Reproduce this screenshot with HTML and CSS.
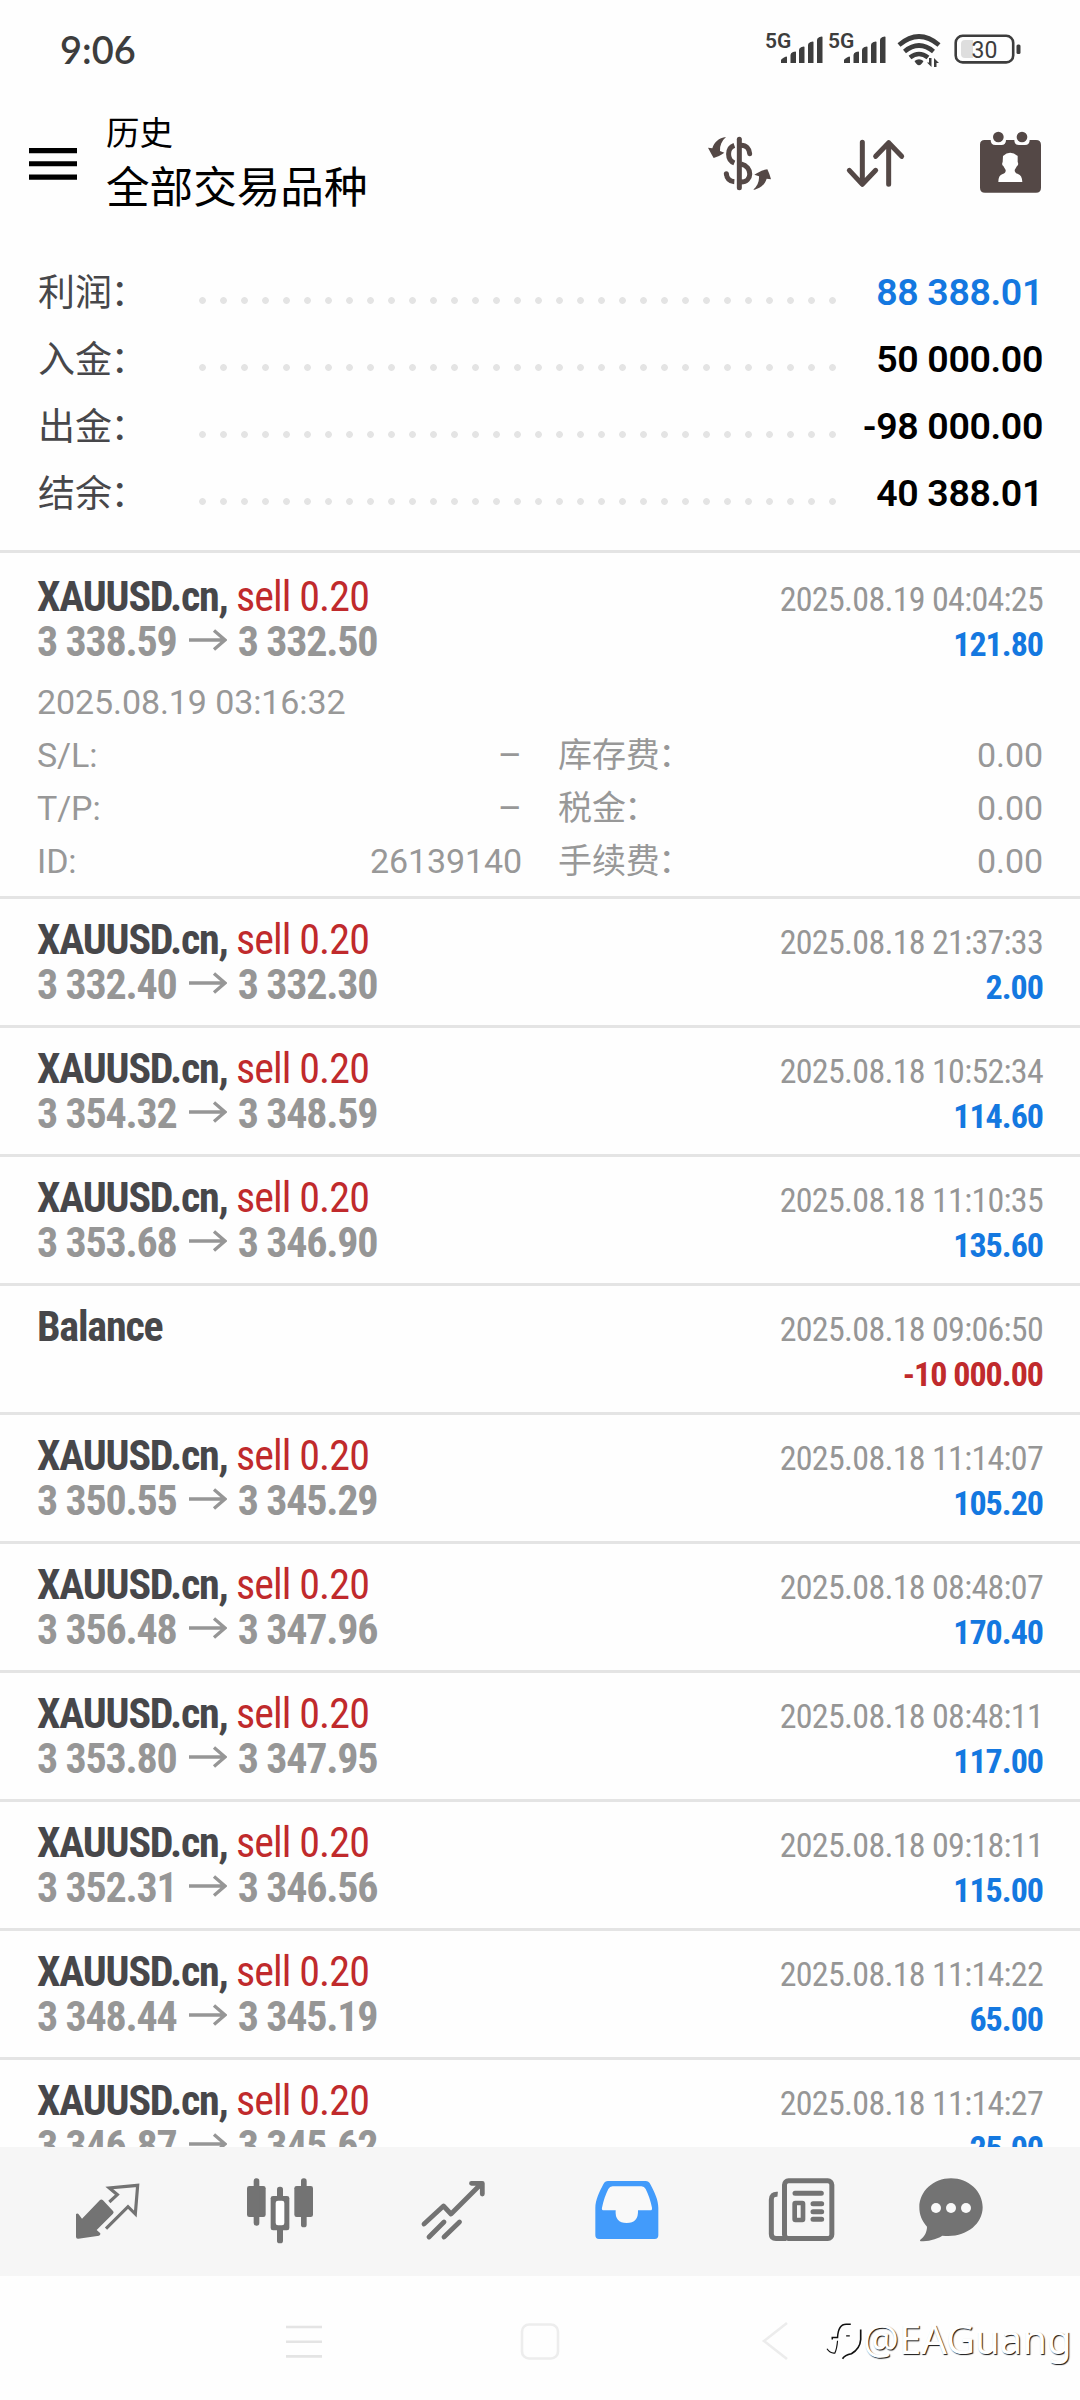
FILE: index.html
```
<!DOCTYPE html>
<html lang="zh-CN">
<head>
<meta charset="utf-8">
<title>历史</title>
<link rel="stylesheet" href="styles.css">
</head>
<body>
<div class="status">
  <span class="clock">9:06</span>
  <svg class="status-icons" viewBox="760 28 270 44" fill="#3d3d3d">
    <defs>
      <g id="signal">
        <text class="net" x="765" y="48">5G</text>
        <path d="M781 60q0-1 3-2.500q3-1.500 3-.5v6h-6zM790.500 55q0-2 2.500-3q3-1 3 0v11h-5.500zM799 50q0-2 2.500-3q3-1 3 0v16h-5.500zM808 45q0-2 2.500-3q3-1 3 0v21h-5.500zM817 40q0-2 2.500-3q3-1 3 0v26h-5.500z"/>
      </g>
    </defs>
    <use href="#signal"/>
    <use href="#signal" x="63"/>
    <g fill="none" stroke="#3d3d3d" stroke-width="4.600">
      <path d="M899 45q20-17 40 0M904.500 51.500q14.500-12 29 0M910 57.500q9-7 18 0" />
    </g>
    <path d="M914.500 61q4.500-3.500 9 0q-2 4-4.500 4.300q-2.500-.300-4.500-4.300zM931.500 58v9l-4.500-4.500h2v-4.500zM934 67v-9l5 5h-2.500v4z"/>
    <rect x="955.700" y="35.800" width="57.500" height="26.600" rx="7" fill="none" stroke="#3d3d3d" stroke-width="2.600"/>
    <path d="M961 44q0-4 4-4h8v18h-8q-4 0-4-4z" fill="#dedede"/>
    <rect x="1016.500" y="44.500" width="4" height="9.500" rx="1.500"/>
    <text class="battery" x="971.500" y="57.500">30</text>
  </svg>
</div>

<header class="header">
  <svg class="menu" viewBox="0 0 48 32"><path d="M0 0h48v5.300H0zM0 13.300h48v5H0zM0 26.400h48v5.300H0z"/></svg>
  <div class="titles">
    <div class="subtitle">历史</div>
    <div class="title">全部交易品种</div>
  </div>
  <div class="actions">
    <svg width="70" height="66" viewBox="72 390 210 198" fill="#544846">
      <g fill="none" stroke="#544846" stroke-width="15">
        <path d="M178 418V563" stroke-linecap="round"/>
        <path d="M163 436C140 444 140 480 163 489"/>
        <path d="M184 436C198 436 208 446 209 461" stroke-linecap="round"/>
        <path d="M183 492C218 500 218 546 183 546"/>
        <path d="M139 521C140 534 148 544 163 545" />
      </g>
      <circle cx="139" cy="521" r="7.500"/>
      <path d="M138 411C116 414 103 426 97 445L84 443C90 454 96 466 101 474C112 470 122 466 133 458L120 453C119 437 125 423 138 411z"/>
      <path d="M219 570C241 566 255 553 260 536L273 538C270 526 266 516 262 508C249 510 237 516 223 524L237 529C238 545 232 558 219 570z"/>
    </svg>
    <svg width="66" height="66" viewBox="486 390 198 198" fill="none" stroke="#544846" stroke-width="15" stroke-linecap="round" stroke-linejoin="round">
      <path d="M547 427V552M508 511L547 553L587 511M626 553V428M587 469L626 428L665 469"/>
    </svg>
    <svg width="66" height="66" viewBox="894 390 198 198" fill="#544846">
      <path d="M914 420h18q0 15 14 15h18q14 0 14-15h25q0 15 14 15h18q14 0 14-15h19q15 0 15 15v128q0 15-15 15H915q-15 0-15-15V434q0-14 14-14z"/>
      <circle cx="955" cy="411" r="16"/><circle cx="1026" cy="411" r="16"/>
      <path fill="#fff" d="M969 468q21-20 44 0v18q4 8-2 12l-7 12q0 9 10 12q12 3 13 24H955q0-21 13-24q10-3 9-12l-7-12q-6-4-2-12z"/>
    </svg>
  </div>
</header>

<section class="summary">
  <div class="sum-row"><span class="sum-label">利润<span class="colon">：</span></span><i class="dots"></i><b class="sum-value blue">88 388.01</b></div>
  <div class="sum-row"><span class="sum-label">入金<span class="colon">：</span></span><i class="dots"></i><b class="sum-value">50 000.00</b></div>
  <div class="sum-row"><span class="sum-label">出金<span class="colon">：</span></span><i class="dots"></i><b class="sum-value">-98 000.00</b></div>
  <div class="sum-row"><span class="sum-label">结余<span class="colon">：</span></span><i class="dots"></i><b class="sum-value">40 388.01</b></div>
</section>

<svg class="defs"><symbol id="arrow" viewBox="0 0 38 22"><path d="M0 11H36M25 1.500L36 11L25 20.500" fill="none" stroke="#969696" stroke-width="3.300"/></symbol></svg>

<main class="deals">
  <article class="deal open">
    <div class="line"><span class="symbol">XAUUSD.cn, <span class="side">sell 0.20</span></span><span class="time">2025.08.19 04:04:25</span></div>
    <div class="line"><span class="price">3 338.59<svg class="arrow"><use href="#arrow"/></svg>3 332.50</span><b class="profit blue">121.80</b></div>
    <div class="details">
      <span class="opened">2025.08.19 03:16:32</span>
      <div class="pair"><span>S/L:</span><span class="dash">–</span></div>
      <div class="pair"><span>库存费<span class="colon">：</span></span><span>0.00</span></div>
      <div class="pair"><span>T/P:</span><span class="dash">–</span></div>
      <div class="pair"><span>税金<span class="colon">：</span></span><span>0.00</span></div>
      <div class="pair"><span>ID:</span><span>26139140</span></div>
      <div class="pair"><span>手续费<span class="colon">：</span></span><span>0.00</span></div>
    </div>
  </article>
  <article class="deal">
    <div class="line"><span class="symbol">XAUUSD.cn, <span class="side">sell 0.20</span></span><span class="time">2025.08.18 21:37:33</span></div>
    <div class="line"><span class="price">3 332.40<svg class="arrow"><use href="#arrow"/></svg>3 332.30</span><b class="profit blue">2.00</b></div>
  </article>
  <article class="deal">
    <div class="line"><span class="symbol">XAUUSD.cn, <span class="side">sell 0.20</span></span><span class="time">2025.08.18 10:52:34</span></div>
    <div class="line"><span class="price">3 354.32<svg class="arrow"><use href="#arrow"/></svg>3 348.59</span><b class="profit blue">114.60</b></div>
  </article>
  <article class="deal">
    <div class="line"><span class="symbol">XAUUSD.cn, <span class="side">sell 0.20</span></span><span class="time">2025.08.18 11:10:35</span></div>
    <div class="line"><span class="price">3 353.68<svg class="arrow"><use href="#arrow"/></svg>3 346.90</span><b class="profit blue">135.60</b></div>
  </article>
  <article class="deal">
    <div class="line"><span class="symbol">Balance</span><span class="time">2025.08.18 09:06:50</span></div>
    <div class="line"><span class="price">&nbsp;</span><b class="profit red">-10 000.00</b></div>
  </article>
  <article class="deal">
    <div class="line"><span class="symbol">XAUUSD.cn, <span class="side">sell 0.20</span></span><span class="time">2025.08.18 11:14:07</span></div>
    <div class="line"><span class="price">3 350.55<svg class="arrow"><use href="#arrow"/></svg>3 345.29</span><b class="profit blue">105.20</b></div>
  </article>
  <article class="deal">
    <div class="line"><span class="symbol">XAUUSD.cn, <span class="side">sell 0.20</span></span><span class="time">2025.08.18 08:48:07</span></div>
    <div class="line"><span class="price">3 356.48<svg class="arrow"><use href="#arrow"/></svg>3 347.96</span><b class="profit blue">170.40</b></div>
  </article>
  <article class="deal">
    <div class="line"><span class="symbol">XAUUSD.cn, <span class="side">sell 0.20</span></span><span class="time">2025.08.18 08:48:11</span></div>
    <div class="line"><span class="price">3 353.80<svg class="arrow"><use href="#arrow"/></svg>3 347.95</span><b class="profit blue">117.00</b></div>
  </article>
  <article class="deal">
    <div class="line"><span class="symbol">XAUUSD.cn, <span class="side">sell 0.20</span></span><span class="time">2025.08.18 09:18:11</span></div>
    <div class="line"><span class="price">3 352.31<svg class="arrow"><use href="#arrow"/></svg>3 346.56</span><b class="profit blue">115.00</b></div>
  </article>
  <article class="deal">
    <div class="line"><span class="symbol">XAUUSD.cn, <span class="side">sell 0.20</span></span><span class="time">2025.08.18 11:14:22</span></div>
    <div class="line"><span class="price">3 348.44<svg class="arrow"><use href="#arrow"/></svg>3 345.19</span><b class="profit blue">65.00</b></div>
  </article>
  <article class="deal">
    <div class="line"><span class="symbol">XAUUSD.cn, <span class="side">sell 0.20</span></span><span class="time">2025.08.18 11:14:27</span></div>
    <div class="line"><span class="price">3 346.87<svg class="arrow"><use href="#arrow"/></svg>3 345.62</span><b class="profit blue">25.00</b></div>
  </article>
</main>

<nav class="tabs">
  <svg viewBox="36 45 210 210" fill="#737373">
    <path d="M120 120q5-3 9 1l30 32q4 4 0 8L110 210l11 10q1 6-4 7l-62 9q-7 1-7-6V162q5-4 8 1l10 13z"/>
    <path d="M148 126L172 104L148 84L233 76L226 162L204 140L138 206" fill="none" stroke="#737373" stroke-width="9.500"/>
  </svg>
  <svg viewBox="552 45 210 210" fill="#737373">
    <rect x="561" y="78" width="56" height="93" rx="7"/><rect x="581" y="55" width="17" height="142" rx="8"/>
    <rect x="703" y="78" width="56" height="93" rx="7"/><rect x="723" y="55" width="17" height="147" rx="8"/>
    <rect x="651" y="80" width="18" height="170" rx="8"/><rect x="632" y="108" width="56" height="103" rx="7"/>
    <rect x="647" y="122" width="26" height="74" rx="7" fill="#fff"/>
  </svg>
  <svg viewBox="419 2175 70 70" fill="none" stroke="#737373" stroke-width="4.800" stroke-linecap="round" stroke-linejoin="round">
    <path d="M424 2224L443.500 2206L451 2214L481 2184M471.500 2183.300H482.300V2194M429 2237L444 2222M444 2237L459.500 2222"/>
  </svg>
  <svg viewBox="30 45 210 210" fill="#429bfb">
    <path d="M84 63H197q9 0 14 10C224 98 235 120 235 144V226q0 11-11 11H57q-11 0-11-11V144C46 120 58 96 70 73q5-10 14-10z"/>
    <path fill="#f9f9f9" d="M98 79H184q9 0 13 8C205 103 212 123 216 143q1 8-5 8H174q2 38-34 38q-36 0-33-38H72q-8 0-6-8C70 123 77 103 85 87q4-8 13-8z"/>
  </svg>
  <svg viewBox="555 45 210 210" fill="none" stroke="#737373" stroke-width="15">
    <rect x="613.500" y="62.500" width="142" height="173" rx="12"/>
    <path d="M593 103Q574 101 574 119V222Q574 235.500 588 235.500H618"/>
    <path d="M645 100H724M699 131H725M699 155H725M699 178H725" stroke-linecap="round"/>
    <rect x="644" y="129" width="25" height="51" rx="2" stroke-width="14"/>
  </svg>
  <svg viewBox="1008 45 210 210" fill="#737373">
    <path d="M1113 55C1166 55 1208 94 1208 142C1208 195 1153 236 1087 227C1068 239 1043 244 1022 244q-4-2-1-5C1033 230 1041 216 1041 200C1026 183 1018 165 1018 142C1018 94 1060 55 1113 55z"/>
    <g fill="#f9f9f9"><circle cx="1068" cy="144" r="15"/><circle cx="1113" cy="144" r="15"/><circle cx="1158" cy="144" r="15"/></g>
  </svg>
</nav>

<footer class="system">
  <svg viewBox="280 2316 50 50"><path d="M286 2327h36M286 2341.700h36M286 2356.400h36" stroke="#e4e4e4" stroke-width="2.600"/></svg>
  <svg viewBox="515 2316 50 50" fill="none"><rect x="522" y="2324.500" width="36" height="34" rx="7" stroke="#ededed" stroke-width="2.600"/></svg>
  <svg viewBox="755 2316 50 50" fill="none"><path d="M787 2323L764 2341L787 2359" stroke="#ececec" stroke-width="2.600"/></svg>
  <div class="watermark">
    <svg viewBox="225 65 110 130" fill="none" stroke="#111">
      <path d="M246 130V124H262Q264 84 288 84H302" stroke-width="4.500"/>
      <path d="M332 100V130Q330 158 304 173Q284 177 277 188" stroke-width="5"/>
      <path d="M262 134Q260 158 254 171Q240 173 230 158M288 119H299" stroke-width="3.500"/>
    </svg>
    <span>@EAGuang</span>
  </div>
</footer>
</body>
</html>
```
FILE: styles.css
```
* { box-sizing: border-box; }

body {
  margin: 0;
  width: 1080px;
  height: 2400px;
  overflow: hidden;
  display: flex;
  flex-direction: column;
  background: #fefefe;
  color: #000;
  font-family: Roboto, "Noto Sans CJK SC", sans-serif;
}

svg { display: block; flex: none; }
.defs { width: 0; height: 0; position: absolute; }
.blue { color: #1478e0; }
.red { color: #c02a2c; }
.colon { margin-left: -1.500px; }

.status {
  height: 100px;
  flex: none;
  display: flex;
  justify-content: space-between;
  padding: 0 50px 0 60px;
}
.clock {
  font: 600 38px/98px Lato, sans-serif;
  color: #3d3d3d;
}
.status-icons { width: 270px; height: 44px; margin-top: 28px; }
.net { font: 600 21px Roboto, sans-serif; }
.battery { font: 400 23px Roboto, sans-serif; }

.header {
  height: 160px;
  flex: none;
  display: flex;
  align-items: flex-start;
  padding: 0 36px 0 29px;
}
.menu { width: 48px; height: 32px; margin-top: 48px; }
.titles {
  margin: 8px auto 0 29px;
  font-family: "Noto Sans CJK SC", sans-serif;
}
.subtitle { font-size: 33.500px; line-height: 46px; }
.title { font-size: 43.600px; line-height: 60px; }
.actions { display: flex; gap: 68px; margin-top: 30px; }
.actions svg:last-child { margin-left: 2px; }

.summary {
  height: 293px;
  flex: none;
  padding: 0 37px 0 38px;
  border-bottom: 3px solid #e4e4e4;
}
.sum-row {
  height: 67px;
  display: flex;
  line-height: 67px;
}
.sum-label { width: 154px; font-size: 37px; color: #47474a; white-space: nowrap; }
.dots {
  width: 652px;
  height: 21px;
  margin-top: 30px;
  background: radial-gradient(circle, #e4e4e4 3px, transparent 3.800px) 0 0 / 21px 21px;
}
.sum-value {
  flex: 1;
  font-size: 37.500px;
  font-weight: 600;
  letter-spacing: -.35px;
  line-height: 65px;
  text-align: right;
  white-space: nowrap;
}

.deals { height: 1594px; flex: none; overflow: hidden; }
.deal {
  height: 129px;
  padding: 18px 37px 0 37px;
  border-bottom: 3px solid #e4e4e4;
  font-family: "Roboto Condensed", sans-serif;
}
.deal.open { height: 346px; padding-top: 21px; }
.line {
  height: 45px;
  line-height: 45px;
  display: flex;
  align-items: baseline;
  justify-content: space-between;
}
.symbol { font-size: 42px; font-weight: 700; color: #47474a; letter-spacing: -1.200px; }
.side { font-weight: 400; color: #c02a2c; letter-spacing: -.9px; }
.price { font-size: 42px; font-weight: 700; color: #969696; letter-spacing: -1.200px; }
.arrow { display: inline-block; width: 38px; height: 22px; margin: 0 11px 0 12px; vertical-align: 5px; }
.time { font-size: 34px; color: #969696; letter-spacing: -.7px; }
.profit { font-size: 34px; font-weight: 700; letter-spacing: -1px; }

.details {
  display: grid;
  grid-template-columns: 485px 485px;
  column-gap: 36px;
  margin-top: 12px;
  font: 400 34px/53px Roboto, "Noto Sans CJK SC", sans-serif;
  letter-spacing: -.1px;
  color: #989898;
}
.opened { grid-column: 1 / 3; }
.pair { height: 53px; display: flex; justify-content: space-between; }
.dash { font-size: 37px; }

.tabs {
  height: 129px;
  flex: none;
  display: grid;
  grid-template-columns: 172px 175px 171px 175px 151px 70px;
  padding: 28px 0 0 72px;
  background: #f6f6f6;
}
.tabs svg { width: 70px; height: 70px; }

.system {
  flex: 1;
  position: relative;
  display: grid;
  grid-template-columns: 235px 240px 50px;
  padding: 40px 0 0 280px;
}
.system > svg { width: 50px; height: 50px; }
.watermark {
  position: absolute;
  left: 825px;
  top: 38px;
  display: flex;
  align-items: center;
  gap: 1px;
  color: #fff;
  font: 400 40px/50px "Noto Sans", sans-serif;
  text-shadow: 1px 1px 1px #111;
}
.watermark svg { width: 37px; height: 43px; }
```
